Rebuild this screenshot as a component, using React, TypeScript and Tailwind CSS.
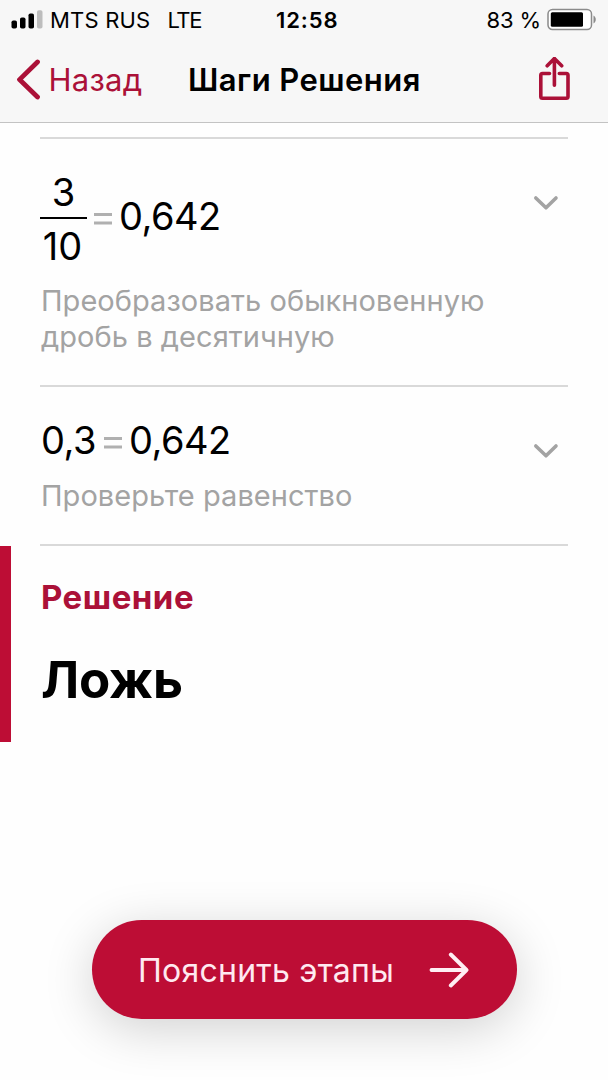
import type { ReactNode } from "react";

function SignalIcon() {
  return (
    <svg className="h-5 w-8 shrink-0" viewBox="0 0 32 20" fill="#000">
      <rect x="0.5" y="10.500" width="5.500" height="8" rx="1.8" />
      <rect x="9" y="7.500" width="5.500" height="11" rx="1.8" />
      <rect x="17.500" y="3.500" width="5.500" height="15" rx="1.8" />
      <rect x="26" y="0.300" width="5.500" height="18.200" rx="1.8" fill="#bdbdbd" />
    </svg>
  );
}

function BatteryIcon() {
  return (
    <svg className="h-6 w-[50px] shrink-0" viewBox="0 0 50 24">
      <rect x="1" y="1.500" width="43.500" height="20" rx="4.500" fill="#fff" stroke="#8b8b8b" strokeWidth="1.5" />
      <rect x="3.800" y="4.300" width="32.200" height="14.500" rx="1.500" fill="#000" />
      <path d="M46.500 7.500c3 1.500 3 6.500 0 8z" fill="#8b8b8b" />
    </svg>
  );
}

function StatusBar() {
  return (
    <div className="flex h-10 items-center pl-[11px] pr-[11px] text-[22px] leading-10">
      <div className="flex w-[265px] items-center">
        <SignalIcon />
        <span className="ml-[7px] tracking-[0.2px]">MTS RUS</span>
        <span className="ml-[17px] tracking-[-1.4px]">LTE</span>
      </div>
      <span className="font-semibold tracking-[0.9px]">12:58</span>
      <div className="ml-auto flex items-center">
        <span className="mr-[6px] tracking-[-0.1px]">83 %</span>
        <BatteryIcon />
      </div>
    </div>
  );
}

function NavBar() {
  return (
    <div className="flex h-20 items-center pl-4 pr-9">
      <button className="flex w-[172px] items-center text-[31px] leading-10 text-[#ab1138]">
        <svg className="h-[42px] w-[26px] shrink-0" viewBox="0 0 26 42" fill="none" stroke="#ab1138" strokeWidth="4.800" strokeLinecap="round" strokeLinejoin="round">
          <path d="M21.500 3 3.500 20.600 21.500 38" />
        </svg>
        <span className="ml-[6.5px] tracking-[0.25px]">Назад</span>
      </button>
      <h1 className="whitespace-nowrap text-[31px] font-semibold leading-10 tracking-[0.45px]">Шаги Решения</h1>
      <button className="ml-auto" aria-label="Поделиться">
        <svg className="h-[46px] w-[34px]" viewBox="0 0 34 46" fill="none" stroke="#ab1138" strokeWidth="3.600" strokeLinecap="round" strokeLinejoin="round">
          <path d="M11.500 16.500H4.500Q2.800 16.500 2.800 18.200V39.500Q2.800 41.200 4.500 41.200H28.300Q30 41.200 30 39.500V18.200Q30 16.500 28.300 16.500H21.300" />
          <path d="M16.400 28.300V1.500M9.200 8.800 16.400 1.500 23.700 8.800" />
        </svg>
      </button>
    </div>
  );
}

function Chevron() {
  return (
    <svg className="h-4 w-[26px] shrink-0" viewBox="0 0 26 16" fill="none" stroke="#a3a3a3" strokeWidth="3.600" strokeLinecap="round" strokeLinejoin="round">
      <path d="M2.800 3 13 12.800 23 3" />
    </svg>
  );
}

function Equals() {
  return (
    <svg className="h-3 w-[18px] shrink-0" viewBox="0 0 18 12" fill="#b0b0b0" role="img" aria-label="=">
      <rect width="18" height="3" y="0" />
      <rect width="18" height="3" y="8.500" />
    </svg>
  );
}

function Step({ children, note, className }: { children: ReactNode; note: string; className: string }) {
  return (
    <section className={"flex flex-col border-b-2 border-[#d9d9d9] " + className}>
      {children}
      <p className="w-[470px] pl-px text-[29px] leading-9 tracking-[0.05px] text-[#a3a3a3]">{note}</p>
    </section>
  );
}

export default function App() {
  return (
    <main className="flex h-[1080px] w-[608px] flex-col overflow-hidden bg-[#fefefe] font-['Inter','Liberation_Sans',sans-serif] text-black">
      <header className="h-[123px] shrink-0 border-b-[1.5px] border-[#c3c3c3] bg-[#f7f7f7]">
        <StatusBar />
        <NavBar />
      </header>

      <div className="mx-10 mt-3.5 border-t-2 border-[#d9d9d9]">
        <Step className="h-[248px]" note="Преобразовать обыкновенную дробь в десятичную">
          <div className="flex h-36 items-start pt-[33px]">
            <div className="flex w-[47px] flex-col items-center text-[38px] leading-10">
              <span className="h-[45px]">3</span>
              <span className="h-0.5 w-full bg-black" />
              <span className="mt-[7px] h-10 pr-0.5 tracking-[0px]">10</span>
            </div>
            <div className="ml-[7px] mt-[41px]">
              <Equals />
            </div>
            <span className="ml-[7px] mt-[24px] text-[38px] leading-10 tracking-[-0.5px]">0,642</span>
            <div className="ml-auto mr-[9px] mt-[23px]">
              <Chevron />
            </div>
          </div>
        </Step>

        <Step className="h-[159px]" note="Проверьте равенство">
          <div className="flex h-[91px] items-start pt-[33px]">
            <span className="pl-px text-[38px] leading-10 tracking-[-0.5px]">0,3</span>
            <div className="ml-2 mt-[17px]">
              <Equals />
            </div>
            <span className="ml-[7px] text-[38px] leading-10 tracking-[-0.5px]">0,642</span>
            <div className="ml-auto mr-[9px] mt-[23px]">
              <Chevron />
            </div>
          </div>
        </Step>
      </div>

      <section className="flex h-[196px] shrink-0 bg-[linear-gradient(to_right,#bd0d35_11.5px,transparent_11.5px)] flex-col pl-[41px] pt-[31px]">
        <h2 className="text-[33px] font-bold leading-10 tracking-[0.5px] text-[#ab1138]">Решение</h2>
        <p className="mt-[33px] text-[51px] font-bold leading-[60px] tracking-[-0.2px]">Ложь</p>
      </section>

      <button className="ml-[92px] mt-[178px] flex h-[99px] w-[425px] shrink-0 items-center rounded-full bg-[#bd0d35] pl-[46px] pr-12 text-[#ffe9f0] shadow-[0_10px_50px_rgba(0,0,0,0.18)]">
        <span className="whitespace-nowrap pt-0.5 text-[32px] leading-10 tracking-[0.25px]">Пояснить этапы</span>
        <svg className="ml-auto h-10 w-10 shrink-0" viewBox="0 0 40 40" fill="none" stroke="#ffeef3" strokeWidth="3.900" strokeLinecap="round" strokeLinejoin="round">
          <path d="M2.500 20H37.500M21.800 4.500 37.500 20 21.800 35.500" />
        </svg>
      </button>
    </main>
  );
}
